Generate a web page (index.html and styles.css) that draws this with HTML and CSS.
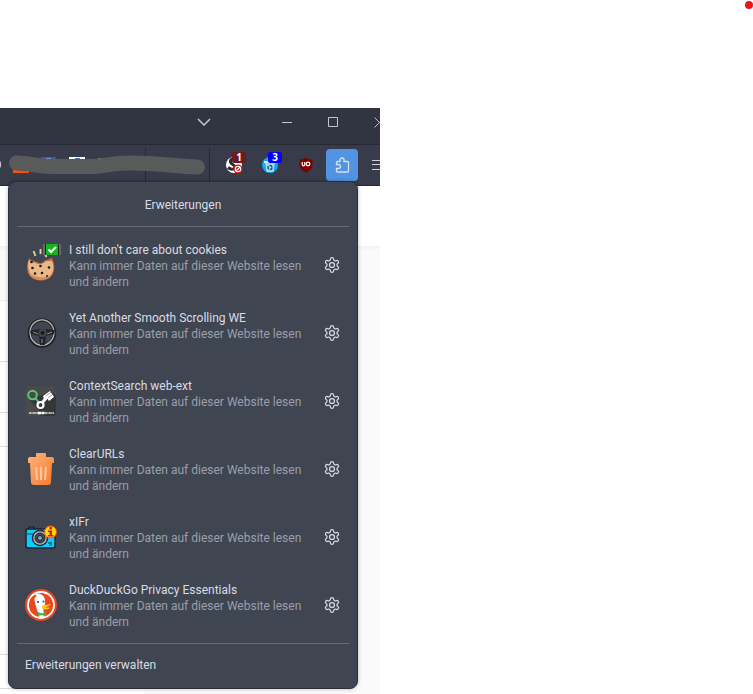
FILE: index.html
```html
<!DOCTYPE html>
<html lang="de">
<head>
  <meta charset="UTF-8" />
  <meta name="viewport" content="width=device-width,initial-scale=1.0"/>
  <title>Erweiterungen</title>
  <link rel="stylesheet" href="styles.css">
</head>
<body>
  <svg class="sprite" aria-hidden="true">
    <symbol id="gear" viewBox="1 1 22 22">
      <path fill="none" stroke="currentColor" stroke-width="1.7" d="M12.22 2h-.44a2 2 0 0 0-2 2v.18a2 2 0 0 1-1 1.73l-.43.25a2 2 0 0 1-2 0l-.15-.08a2 2 0 0 0-2.73.73l-.22.38a2 2 0 0 0 .73 2.73l.15.1a2 2 0 0 1 1 1.72v.51a2 2 0 0 1-1 1.74l-.15.09a2 2 0 0 0-.73 2.73l.22.38a2 2 0 0 0 2.73.73l.15-.08a2 2 0 0 1 2 0l.43.25a2 2 0 0 1 1 1.73V20a2 2 0 0 0 2 2h.44a2 2 0 0 0 2-2v-.18a2 2 0 0 1 1-1.73l.43-.25a2 2 0 0 1 2 0l.15.08a2 2 0 0 0 2.73-.73l.22-.39a2 2 0 0 0-.73-2.73l-.15-.08a2 2 0 0 1-1-1.74v-.5a2 2 0 0 1 1-1.74l.15-.09a2 2 0 0 0 .73-2.73l-.22-.38a2 2 0 0 0-2.73-.73l-.15.08a2 2 0 0 1-2 0l-.43-.25a2 2 0 0 1-1-1.73V4a2 2 0 0 0-2-2z"/>
      <circle cx="12" cy="12" r="3.4" fill="none" stroke="currentColor" stroke-width="1.7"/>
    </symbol>
  </svg>

  <span class="record-dot"></span>

  <div class="browser">
    <div class="titlebar">
      <button class="title-btn tabs-btn" aria-label="Alle Tabs auflisten">
        <svg width="14" height="8" viewBox="0 0 14 8"><path d="M1 1l6 6 6-6"/></svg>
      </button>
      <div class="window-controls">
        <button class="title-btn" aria-label="Minimieren"><svg width="11" height="11"><path d="M0 5.5h10"/></svg></button>
        <button class="title-btn" aria-label="Maximieren"><svg width="11" height="11"><path d="M.5 .5h9v9h-9z"/></svg></button>
        <button class="title-btn" aria-label="Schließen"><svg width="11" height="11"><path d="M.5 .5l10 10M10.500 .5l-10 10"/></svg></button>
      </div>
    </div>

    <div class="toolbar">
      <div class="address">
        <svg width="209" height="40" viewBox="0 0 209 40">
          <path d="M0 16c1.500 1 1.500 6 0 7z" fill="#c8c8d0"/>
          <path d="M145.500 3v33" stroke="#272935"/>
          <path d="M41 12h15v4H41z" fill="#2f5da0"/>
          <path d="M46 13h5v2h-5z" fill="#8fa6c8"/>
          <path d="M69 12h16v4H69z" fill="#fff"/>
          <path d="M75 13h5v3h-5z" fill="#4a6ea8"/>
          <path d="M98 13h4v3h-4z" fill="#8a8c92"/>
          <path d="M13 22h16v6H13z" fill="#ff5000"/>
          <path d="M16.500 18C30 18 36 21.500 52 21.500H94C106 21 112 18 128 18C150 17.500 176 21 197.500 22" fill="none" stroke="#595a5a" stroke-width="15" stroke-linecap="round"/>
        </svg>
      </div>
      <div class="addons">
        <button class="addon-btn" aria-label="Stylus">
          <svg width="18" height="18" viewBox="0 0 18 18">
            <circle cx="9" cy="9" r="8" fill="#fff"/>
            <path d="M13 3C9 1.500 5 3 5.500 6C6 9 10 8.500 10 11C10 13.500 6 14 3 11.500" fill="none" stroke="#2b2b30" stroke-width="3"/>
            <circle cx="13" cy="13" r="4.500" fill="#d8131c"/>
            <circle cx="13" cy="13" r="2.700" fill="none" stroke="#fff" stroke-width="1.100"/>
            <path d="M11 15l4-4" stroke="#fff" stroke-width="1.100"/>
          </svg>
          <span class="count count-red">1</span>
        </button>
        <button class="addon-btn" aria-label="Cookie AutoDelete">
          <svg width="18" height="18" viewBox="0 0 18 18">
            <circle cx="9" cy="9" r="8" fill="#12a8ee"/>
            <path d="M4 6h10l-1.500 10h-7z" fill="#9bdcfb"/>
            <path d="M3 5h12v2H3z" fill="#d5f0fc"/>
            <circle cx="9" cy="11.500" r="2" fill="none" stroke="#274b68" stroke-width="1.400" stroke-dasharray="3 1"/>
          </svg>
          <span class="count count-blue">3</span>
        </button>
        <button class="addon-btn" aria-label="uBlock Origin">
          <svg width="16" height="16" viewBox="0 0 16 16">
            <path d="M8 .5C10 2 12.500 2.500 14.500 2.500V7C14.500 11 12 13.500 8 15.500C4 13.500 1.500 11 1.500 7V2.500C3.500 2.500 6 2 8 .5z" fill="#800000"/>
            <path d="M4.200 5v2.500a1.300 1.300 0 0 0 2.600 0V5" fill="none" stroke="#fff" stroke-width="1.200"/>
            <circle cx="10" cy="7" r="1.800" fill="none" stroke="#fff" stroke-width="1.300"/>
          </svg>
        </button>
        <button class="addon-btn active" aria-label="Erweiterungen">
          <svg width="16" height="16" viewBox="0 0 16 16"><path d="M2.500 7.500v-2a1 1 0 0 1 1-1H6V3a2 2 0 0 1 4 0v1.500h3.500a1 1 0 0 1 1 1V14a1 1 0 0 1-1 1h-10a1 1 0 0 1-1-1v-2.500h2a2 2 0 0 0 0-4z" fill="none" stroke="#d3e3f8" stroke-width="1.300"/></svg>
        </button>
        <button class="addon-btn" aria-label="Menü">
          <svg width="16" height="16"><path d="M0 3.500h16M0 7.500h16M0 12.500h16" stroke="#d0d2da"/></svg>
        </button>
      </div>
    </div>

    <div class="page">
      <div class="page-header"></div>
      <div class="page-body">
        <div class="page-nav">
          <div class="nav-row nav-title"></div>
          <div class="nav-row nav-large"></div>
          <div class="nav-row nav-medium"></div>
          <div class="nav-row nav-small"></div>
          <div class="nav-row nav-list"></div>
          <div class="nav-row nav-small"></div>
        </div>
        <div class="page-content"></div>
      </div>
    </div>

    <div class="panel">
      <h1 class="panel-title">Erweiterungen</h1>
      <ul class="ext-list">
        <li class="ext">
          <svg class="ext-icon" viewBox="0 0 32 32">
            <path d="M4 9C6 12 9 11 12 13C15 15 18 14 20 11C22 12 25 9 27 9C33 21 27 31.500 16 31.500C4 31.500-1 21 4 9z" fill="#bd6a3c"/>
            <path d="M4 11C7 14 10 13 13 15C16 16 19 14 21 12C23 13 25 11 27 12C31 22 26 30 16 30C6 30 1 21 4 11z" fill="#eab98a"/>
            <path d="M3 23C6 33 24 34 28 24C24 30 10 30 3 23z" fill="#d98b57"/>
            <path d="M8.500 2l2 5M15.500 0v5M20 5l1.500 3" stroke="#e9d3a0" stroke-width="1.800"/>
            <g fill="#241b19"><circle cx="6.500" cy="13" r="1.300"/><circle cx="15.500" cy="17" r="1.300"/><circle cx="24" cy="18.500" r="1.300"/><circle cx="10" cy="24.500" r="1.300"/><circle cx="17" cy="24" r="1.300"/><circle cx="7.500" cy="19" r="1.300"/><circle cx="22" cy="27" r="1"/></g>
            <path d="M18-5h2V6h-2zM34-5h2V6h-2z" fill="#656a69"/>
            <path d="M20-5h2V6h-2zM33-5h1V6h-1z" fill="#202720"/>
            <path d="M21-5h12V6H21z" fill="#14b51c"/>
            <path d="M23.500 .5l2.500 2.500 5-5" fill="none" stroke="#fff" stroke-width="2"/>
          </svg>
          <div class="ext-text">
            <h2>I still don't care about cookies</h2>
            <p>Kann immer Daten auf dieser Website lesen und ändern</p>
          </div>
          <button class="gear-btn" aria-label="Einstellungen"><svg width="16" height="16"><use href="#gear"/></svg></button>
        </li>
        <li class="ext">
          <svg class="ext-icon" viewBox="0 0 32 32">
            <ellipse cx="17" cy="16" rx="12.500" ry="13" fill="none" stroke="#202124" stroke-width="3.500"/>
            <ellipse cx="17" cy="15.500" rx="12" ry="12.700" fill="none" stroke="#b9b9b7" stroke-width="1.300"/>
            <path d="M5 14C10 12 24 12 30 13L29 17L21 19L20 28H15L14 19L6 17z" fill="#242427"/>
            <circle cx="17.500" cy="16" r="4" fill="#46474b"/>
            <path d="M8 15l5 2M27 15l-5 2M17 22v4" stroke="#8c8d8f"/>
            <circle cx="17.500" cy="16" r="2" fill="#18191c"/>
          </svg>
          <div class="ext-text">
            <h2>Yet Another Smooth Scrolling WE</h2>
            <p>Kann immer Daten auf dieser Website lesen und ändern</p>
          </div>
          <button class="gear-btn" aria-label="Einstellungen"><svg width="16" height="16"><use href="#gear"/></svg></button>
        </li>
        <li class="ext">
          <svg class="ext-icon" viewBox="0 0 32 32">
            <rect x="0" y="1" width="31" height="30" rx="5" fill="#4a4a4a"/>
            <path d="M4 14L14 26L16 31H27Q31 31 31 26V11L26 7z" fill="#353637"/>
            <circle cx="7.500" cy="10" r="4.300" fill="none" stroke="#5cc57a" stroke-width="2"/>
            <path d="M10.500 13l4 6" stroke="#5cc57a" stroke-width="2"/>
            <circle cx="15.500" cy="20" r="3" fill="none" stroke="#fff" stroke-width="2.200"/>
            <path d="M17 18l5-6" stroke="#fff" stroke-width="3"/>
            <path d="M18 11l7-5 4 6-5 4-2-3-3 1z" fill="#fff"/>
            <path d="M21 11l5-4M23 13l5-4" stroke="#777" stroke-width=".7"/>
            <path d="M4 28h9M20 28h9" stroke="#e5e5e5" stroke-width="1.600" stroke-dasharray="2 .4 1 .4"/>
            <path d="M13 28h7" stroke="#fff" stroke-width="2.600" stroke-dasharray="3 .4"/>
          </svg>
          <div class="ext-text">
            <h2>ContextSearch web-ext</h2>
            <p>Kann immer Daten auf dieser Website lesen und ändern</p>
          </div>
          <button class="gear-btn" aria-label="Einstellungen"><svg width="16" height="16"><use href="#gear"/></svg></button>
        </li>
        <li class="ext">
          <svg class="ext-icon" viewBox="0 0 32 32">
            <defs><linearGradient id="bin" x1="0" y1="0" x2="1" y2="1"><stop offset="0" stop-color="#ffb37e"/><stop offset="1" stop-color="#f47b2c"/></linearGradient></defs>
            <path d="M12 0h8q1 0 1 1v3h6q2 0 2 2v4h-2l-1 19q0 3-3 3H9q-3 0-3-3L5 10H3V6q0-2 2-2h6V1q0-1 1-1z" fill="url(#bin)"/>
            <path d="M11 14l1 13M16 14v13M21 14l-1 13" stroke="#ffc69c" stroke-width="2"/>
          </svg>
          <div class="ext-text">
            <h2>ClearURLs</h2>
            <p>Kann immer Daten auf dieser Website lesen und ändern</p>
          </div>
          <button class="gear-btn" aria-label="Einstellungen"><svg width="16" height="16"><use href="#gear"/></svg></button>
        </li>
        <li class="ext">
          <svg class="ext-icon" viewBox="0 0 32 32">
            <path d="M4 9V6h5v3" fill="#6a7580" stroke="#20242a" stroke-width="1.500"/>
            <rect x="1" y="8" width="29" height="19" rx="2" fill="#0bcdfb" stroke="#1a2430" stroke-width="1.500"/>
            <path d="M1 13h29" stroke="#1a4960"/>
            <circle cx="15" cy="17" r="7.500" fill="#b9c3ca" stroke="#252a34" stroke-width="1.500"/>
            <circle cx="15" cy="17" r="5" fill="#41505f" stroke="#171c24"/>
            <circle cx="15" cy="17" r="2.500" fill="#88a0b4" stroke="#171c24"/>
            <path d="M23 22h4M24 24h3" stroke="#122c3a"/>
            <circle cx="25.500" cy="11" r="6" fill="#ffda00" stroke="#ff4a18"/>
            <path d="M24.500 6h2.500v2.500h-2.500zM23 9.500h4V14h1.500v1.500H23V14h1.500v-3H23z" fill="#e31410"/>
          </svg>
          <div class="ext-text">
            <h2>xIFr</h2>
            <p>Kann immer Daten auf dieser Website lesen und ändern</p>
          </div>
          <button class="gear-btn" aria-label="Einstellungen"><svg width="16" height="16"><use href="#gear"/></svg></button>
        </li>
        <li class="ext">
          <svg class="ext-icon" viewBox="0 0 32 32">
            <circle cx="16" cy="16" r="16" fill="#e8471f"/>
            <circle cx="16" cy="16" r="13" fill="none" stroke="#fff" stroke-width="1.800"/>
            <path d="M10 6C12 4 15 4.500 17 6C20 7.500 20.500 12 20 15L18 20L20 27.500C18 29 15 28.500 14 28C13 22 10 16 9.500 11C9 9 10 8 12 7z" fill="#fff"/>
            <circle cx="13" cy="13" r="1" fill="#27466f"/><circle cx="18.500" cy="12.500" r="1" fill="#27466f"/>
            <path d="M17 17C20 15 23 16 26 15C25 17 22 18 20 18C22 19 24 18 25 19C22 21 18 21 17 19z" fill="#fbcc08"/>
            <path d="M13 23l4 1.500 4-2v5l-4-1.500-4 1z" fill="#3fb24c"/>
          </svg>
          <div class="ext-text">
            <h2>DuckDuckGo Privacy Essentials</h2>
            <p>Kann immer Daten auf dieser Website lesen und ändern</p>
          </div>
          <button class="gear-btn" aria-label="Einstellungen"><svg width="16" height="16"><use href="#gear"/></svg></button>
        </li>
      </ul>
      <div class="panel-footer">
        <button class="manage-btn">Erweiterungen verwalten</button>
      </div>
    </div>
  </div>
</body>
</html>
```
FILE: styles.css
```css
:root {
  --titlebar: #31353f;
  --toolbar: #383b4a;
  --panel: #404552;
  --dark-line: #262833;
  --divider: #666a75;
  --text: #d8dce5;
  --muted: #9a9faa;
  --accent: #5294e2;
}
* { margin: 0; padding: 0; box-sizing: border-box; }
body {
  font-family: Roboto, 'Liberation Sans', sans-serif;
  font-size: 12px;
  line-height: 16px;
  color: var(--text);
  background: #fff;
  padding-top: 108px;
}
button { font: inherit; color: inherit; background: none; border: none; cursor: pointer; }
svg { display: block; }
.sprite { position: absolute; width: 0; height: 0; }
.record-dot {
  position: absolute; top: 1px; right: 0;
  width: 8px; height: 8px; border-radius: 50%; background: #e9151d;
}

.browser { position: relative; width: 100%; max-width: 380px; overflow: hidden; }

/* title bar */
.titlebar {
  display: flex; justify-content: flex-end;
  height: 37px; padding-bottom: 8px;
  background: var(--titlebar); border-bottom: 1px solid var(--dark-line);
}
.title-btn {
  display: flex; align-items: center; justify-content: center;
  width: 46px; height: 28px; flex-shrink: 0;
}
.title-btn path { fill: none; stroke: #c3c6d0; }
.tabs-btn { width: 36px; margin-right: 42px; }
.tabs-btn path { stroke-width: 1.5; }
.window-controls { display: flex; margin-right: -22px; }

/* toolbar */
.toolbar {
  display: flex; justify-content: space-between;
  height: 41px; background: var(--toolbar); border-bottom: 1px solid var(--dark-line);
}
.address { position: relative; width: 210px; }
.address::after {
  content: ''; position: absolute; top: 3px; bottom: 0; right: 0;
  width: 1px; background: var(--dark-line);
}
.addons { display: flex; align-items: center; margin-right: -18px; }
.addon-btn {
  position: relative;
  display: flex; align-items: center; justify-content: center;
  width: 36px; height: 32px;
}
.addon-btn.active { width: 32px; margin: 0 4px 0 2px; border-radius: 4px; background: var(--accent); }
.count {
  position: absolute; top: 3px; left: 16px;
  width: 14px; height: 11px; border-radius: 2px;
  font-family: 'Open Sans', sans-serif; font-size: 10px; font-weight: 700;
  line-height: 11px; text-align: center; color: #fff;
}
.count-red { background: #6b1a20; }
.count-blue { background: #0000ff; }

/* page behind the panel */
.page { background: #fff; }
.page-header { height: 60px; }
.page-body { display: grid; grid-template-columns: 144px 1fr; }
.page-content { background: linear-gradient(#f0f0f0, #fafafa 4px); }
.nav-row { border-bottom: 1px solid #dddde0; }
.nav-title { height: 55px; background: linear-gradient(#f0f0f0, #fafafa 4px); border-color: #eee; }
.nav-large { height: 61px; }
.nav-medium { height: 51px; }
.nav-small { height: 34px; }
.nav-list { height: 208px; }
.page-nav { padding-bottom: 5px; }

/* extensions panel */
.panel {
  position: absolute; top: 73px; left: 8px; right: 22px;
  padding: 0 8px;
  background: var(--panel); border: 1px solid #2b2e39; border-radius: 8px;
  box-shadow: 0 0 4px rgba(0,0,0,0.25);
}
.panel-title {
  padding: 15px 0 13px;
  font-size: 12px; font-weight: 400; text-align: center;
  border-bottom: 1px solid var(--divider);
}
.ext-list { list-style: none; padding: 4px 0; }
.ext { display: flex; align-items: center; height: 68px; padding: 0 8px; }
.ext-icon { width: 32px; height: 32px; flex-shrink: 0; overflow: visible; }
.ext-text { flex: 1; min-width: 0; padding: 2px 8px 0 12px; }
.ext-text h2 { font-size: 12px; font-weight: 400; }
.ext-text p { color: var(--muted); }
.gear-btn { display: flex; padding: 8px; margin-right: -7px; }
.panel-footer { padding: 13px 8px 15px; border-top: 1px solid var(--divider); }
.manage-btn { display: block; text-align: left; }
```
